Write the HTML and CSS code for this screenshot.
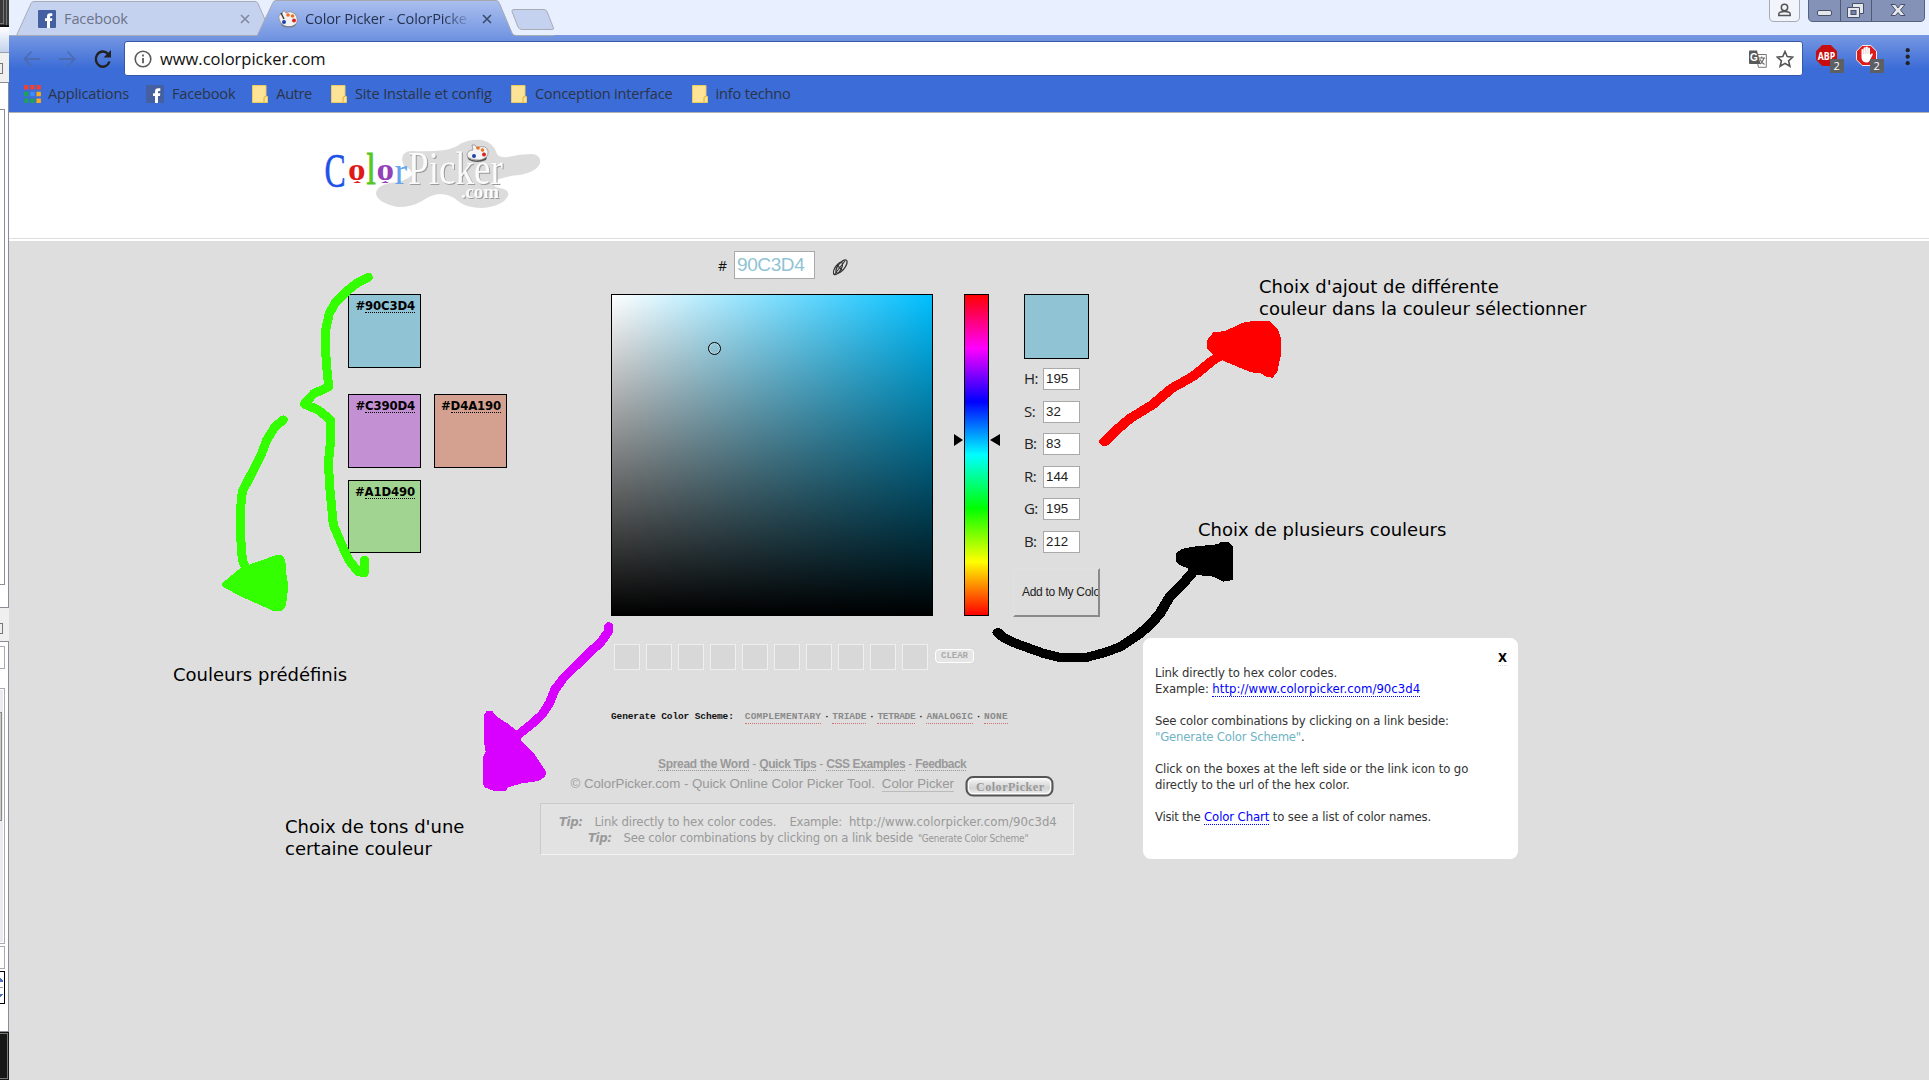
FILE: index.html
```html
<!DOCTYPE html>
<html lang="fr">
<head>
<meta charset="utf-8">
<title>Color Picker - ColorPicker.com</title>
<link rel="stylesheet" href="styles.css">
</head>
<body>
<svg class="backdrop" width="9" height="1080" viewBox="0 0 9 1080" shape-rendering="crispEdges">
  <defs><linearGradient id="bg1" x2="0" y2="1"><stop offset="0" stop-color="#fff"/><stop offset="1" stop-color="#c3d2ec"/></linearGradient></defs>
  <rect width="9" height="1080" fill="#fff"/>
  <rect width="9" height="27" fill="#3a3a3a"/><path d="M3.5 0V23.5H0M6.500 0V25.500" fill="none" stroke="#777"/><rect y="25" width="9" height="2" fill="#111"/>
  <rect y="27" width="9" height="25" fill="url(#bg1)"/><rect y="52" width="9" height="1" fill="#9aa0ac"/>
  <rect y="53" width="9" height="29" fill="#efefef"/><path d="M0 63.500H2.500V73.500H0" fill="none" stroke="#777"/>
  <path d="M0 82.500H8.500V607.500H0M0 109.500H4.500V584.500H0" fill="none" stroke="#8c8c98"/>
  <rect y="608" width="9" height="33" fill="#efefef"/><path d="M0 623.500H2.500V633.500H0" fill="none" stroke="#777"/>
  <path d="M0 641.500H8.500V1031.500H0" fill="none" stroke="#8c8c98"/>
  <path d="M0 646.500H4.500V668.500H0M0 688.500H4.500V943.500H0M0 946.500H4.500V968.500H0" fill="none" stroke="#a9a9b4"/>
  <rect y="690" width="3" height="252" fill="#ececee"/><path d="M0 712.500H1.500V820.500H0" fill="#ccc" stroke="#888"/>
  <path d="M0 971.500H4.500V1003.500H0" fill="none" stroke="#000"/><path d="M0 978V982H3V980ZM0 994H3L0 997Z" fill="#4f6fc0"/><rect y="987" width="3" height="1" fill="#999"/>
  <rect y="1032" width="9" height="48" fill="#161616"/><path d="M0 1033.500H7.500V1078.500H0" fill="none" stroke="#777"/>
</svg>
<div class="window">
  <header class="tabstrip">
    <svg class="tab-shapes" width="560" height="36" viewBox="0 0 560 36">
      <defs><linearGradient id="act" x2="0" y2="1"><stop offset="0" stop-color="#aabfee"/><stop offset="1" stop-color="#7597e2"/></linearGradient></defs>
      <path d="M0 35.500H545" stroke="#a7acb9"/>
      <path d="M7.500 35.500L22 3.500Q23 1.500 25 1.500H246Q248 1.500 249 3.500L263 35.500Z" fill="#c5d2ef" stroke="#a9abb4"/>
      <path d="M248 36L263.500 3.500Q264.500 .5 267 .5H487Q489.500 .5 490.500 3.500L503 33Q504 35.500 507 36Z" fill="url(#act)"/>
      <path d="M248 36L263.500 3.500Q264.500 .5 267 .5H487Q489.500 .5 490.500 3.500L503 33Q504 35.500 507 35.500" fill="none" stroke="#a6a8b0"/>
      <path d="M505 9.500H535Q537 9.500 538 11.500L544.500 28Q545 29.500 543 29.500H513Q510 29.500 509 27L503 11.500Q502.500 9.500 505 9.500Z" fill="#c5d2ef" stroke="#a9abb4"/>
    </svg>
    <div class="tab tab-one">
      <svg class="fb" width="18" height="18" viewBox="0 0 18 18"><rect width="18" height="18" rx="1" fill="#4460a0"/><path d="M9 18V11H7V8.300H9V6.500Q9 3.300 12.200 3.300H14.300V6H13Q12 6 12 7V8.300H14.300L14 11H12V18Z" fill="#fff"/></svg>
      <span class="tab-title">Facebook</span>
      <svg class="close" width="10" height="10" viewBox="0 0 10 10"><path d="M1 1L9 9M9 1L1 9" stroke="#7f8698" stroke-width="1.500"/></svg>
    </div>
    <div class="tab tab-two">
      <svg width="20" height="18" viewBox="0 0 20 18"><path d="M1 9Q0 4 4 4L5 1Q7 0 8 3Q12 0 17 4Q21 9 18 14Q14 18 7 16Q2 14 1 9Z" fill="#f3f3f5" stroke="#888" stroke-width=".8"/><path d="M3 14Q10 19 18 14L17 16Q10 19 4 16Z" fill="#777"/><circle cx="10" cy="5" r="1.800" fill="#f07020"/><circle cx="14.500" cy="6" r="1.800" fill="#f07020"/><circle cx="16" cy="10.500" r="2" fill="#d22"/><circle cx="6" cy="12" r="2" fill="#24a"/><path d="M3 3L6 9" stroke="#444" stroke-width="1.500"/></svg>
      <span class="tab-title">Color Picker - ColorPicke</span>
      <svg class="close" width="10" height="10" viewBox="0 0 10 10"><path d="M1 1L9 9M9 1L1 9" stroke="#3c4a6c" stroke-width="1.600"/></svg>
    </div>
    <svg class="winctl" width="160" height="23" viewBox="0 0 160 23">
      <path d="M.5 -1V17Q.5 21.500 5 21.500H26Q30.500 21.500 30.500 17V-1Z" fill="#f1f4fb" stroke="#a9abb4"/>
      <circle cx="15.500" cy="7.500" r="3.200" fill="none" stroke="#555" stroke-width="1.500"/><path d="M9.800 15.500V14Q10 11.500 15.500 11.500Q21 11.500 21.200 14V15.500Z" fill="none" stroke="#555" stroke-width="1.500"/>
      <path d="M39.500 -1V17Q39.500 21.500 44 21.500H151Q155.500 21.500 155.500 17V-1Z" fill="#8492b8" stroke="#55617f"/><path d="M71.500 0V21M102.500 0V21" stroke="#4e5976"/>
      <rect x="48.500" y="10.500" width="14" height="5" rx="1.500" fill="#e4e6ea" stroke="#46506a"/>
      <path d="M83.500 3.500H94.500V13.500H90.500V17.500H78.500V7.500H83.500Z" fill="#e4e6ea" stroke="#46506a"/><rect x="82" y="10.500" width="5" height="4" fill="#7583a8" stroke="#46506a"/><path d="M83.500 7.500H90.500V13.500" fill="none" stroke="#46506a"/>
      <path d="M122 4.500H126.500L129 8L131.500 4.500H136L131.500 10L136 15.500H131.500L129 12.500L126.500 15.500H122L126.500 10Z" fill="#e4e6ea" stroke="#46506a"/>
    </svg>
  </header>
  <div class="chrome">
    <div class="navrow">
      <svg class="navicons" width="100" height="24" viewBox="0 0 100 24"><path d="M24 12H8.500M15.500 4.500L8.500 12L15.500 19.500M43 12H58.500M51.500 4.500L58.500 12L51.500 19.500" fill="none" stroke="#4b6cb4" stroke-width="1.800"/><path d="M93.500 14.500A7 7.600 0 1 1 92 7" fill="none" stroke="#222" stroke-width="2.400"/><path d="M95 3V10.500H87.500Z" fill="#222"/></svg>
      <div class="omnibox">
        <svg width="18" height="18" viewBox="0 0 18 18"><circle cx="9" cy="9" r="7.800" fill="none" stroke="#5a5a5a" stroke-width="1.600"/><path d="M9 8V13.200M9 4.600V6.400" stroke="#5a5a5a" stroke-width="1.800"/></svg>
        <span class="url">www.colorpicker.com</span>
        <svg class="translate" width="18" height="18" viewBox="0 0 18 18"><path d="M6.500 4.500H17.300V17.300H9.500Z" fill="#fff" stroke="#777"/><path d="M0 1.500Q0 .5 1 .5H8L11.500 14H1Q0 14 0 13Z" fill="#595959"/><text x="1" y="11" class="tg">G</text><path d="M9.500 8H16M12.700 6.500V8M15 8Q13 13 10.800 14M11 9.500Q13 13 15.500 14.500" fill="none" stroke="#666" stroke-width="1.100"/></svg>
        <svg width="18" height="18" viewBox="0 0 18 18"><path d="M9 1.500L11.200 6.600L16.800 7.100L12.600 10.800L13.900 16.300L9 13.400L4.100 16.300L5.400 10.800L1.200 7.100L6.800 6.600Z" fill="none" stroke="#555" stroke-width="1.600"/></svg>
      </div>
      <svg class="ext" width="110" height="34" viewBox="0 0 110 34">
        <path d="M6.200 0H14.800L21 6.200V14.800L14.800 21H6.200L0 14.800V6.200Z" transform="translate(3 4)" fill="#c70d0d"/><text x="4.700" y="18.500" class="abp" textLength="17.500" lengthAdjust="spacingAndGlyphs">ABP</text>
        <rect x="17" y="18" width="14" height="14" fill="#5c5f63"/><text x="20.500" y="29.300" class="bdg">2</text>
        <path d="M6.200 .5H14.800L20.500 6.200V14.800L14.800 20.500H6.200L.5 14.800V6.200Z" transform="translate(43 4)" fill="#e01b1b" stroke="#eee"/><path d="M48.500 14V8.500Q49.500 7.500 50.500 8.500V7Q51.500 5.500 52.500 7V6Q53.800 5 54.900 6V7Q56.500 6 57 7.500V14L58.500 12.500Q60.300 12 59.800 13.500L57 19Q56 22 53 21.500Q49 21 48.500 17Z" fill="#fff"/><path d="M50.700 8V13M52.700 7V13M54.900 7V13" stroke="#e6a0a0" stroke-width=".5"/>
        <rect x="57" y="18" width="14" height="14" fill="#5c5f63"/><text x="60.500" y="29.300" class="bdg">2</text>
        <circle cx="94.700" cy="9.200" r="2.100" fill="#222"/><circle cx="94.700" cy="15.700" r="2.100" fill="#222"/><circle cx="94.700" cy="22.200" r="2.100" fill="#222"/>
      </svg>
    </div>
    <nav class="bookmarks">
      <svg width="17" height="18" viewBox="0 0 17 18"><g fill="#ea4335"><path d="M0 0H4.500V4.500H0ZM6.200 0H10.700V4.500H6.200ZM12.400 0H16.900V4.500H12.400Z"/></g><path d="M0 6.700H4.500V11.200H0ZM0 13.400H4.500V17.900H0ZM6.200 13.400H10.700V17.900H6.200Z" fill="#1fa05c"/><path d="M6.200 6.700H10.700V11.200H6.200Z" fill="#3f8cff"/><path d="M12.400 6.700H16.900V11.200H12.400ZM12.400 13.400H16.900V17.900H12.400Z" fill="#f5ab1c"/></svg>
      <span class="bm b1">Applications</span>
      <svg width="18" height="18" viewBox="0 0 18 18"><rect width="18" height="18" rx="1" fill="#4460a0"/><path d="M9 18V11H7V8.300H9V6.500Q9 3.300 12.200 3.300H14.300V6H13Q12 6 12 7V8.300H14.300L14 11H12V18Z" fill="#fff"/></svg>
      <span class="bm b2">Facebook</span>
      <svg width="16" height="18" viewBox="0 0 16 18"><path d="M.5 .5H14V11.500H15.500V17.500H.5Z" fill="#fde396" stroke="#eccb5e"/><path d="M12 17V13Q12 11.500 14 11.500" fill="none" stroke="#d9ae35"/></svg>
      <span class="bm b3">Autre</span>
      <svg width="16" height="18" viewBox="0 0 16 18"><path d="M.5 .5H14V11.500H15.500V17.500H.5Z" fill="#fde396" stroke="#eccb5e"/><path d="M12 17V13Q12 11.500 14 11.500" fill="none" stroke="#d9ae35"/></svg>
      <span class="bm b4">Site Installe et config</span>
      <svg width="16" height="18" viewBox="0 0 16 18"><path d="M.5 .5H14V11.500H15.500V17.500H.5Z" fill="#fde396" stroke="#eccb5e"/><path d="M12 17V13Q12 11.500 14 11.500" fill="none" stroke="#d9ae35"/></svg>
      <span class="bm b5">Conception interface</span>
      <svg width="16" height="18" viewBox="0 0 16 18"><path d="M.5 .5H14V11.500H15.500V17.500H.5Z" fill="#fde396" stroke="#eccb5e"/><path d="M12 17V13Q12 11.500 14 11.500" fill="none" stroke="#d9ae35"/></svg>
      <span class="bm b6">info techno</span>
    </nav>
  </div>
  <div class="site-head">
    <svg class="logo" width="240" height="80" viewBox="320 130 240 80">
      <path d="M402 160Q402 151 412 151Q430 152 445 150Q455 148 460 144Q470 139 482 140Q494 143 497 154Q500 158 508 157Q520 154 532 154Q541 155 540 163Q538 171 520 175Q505 176 494 181Q492 187 500 188Q510 190 508 196Q503 206 482 208Q466 208 458 201Q450 194 440 194Q430 195 422 201Q412 207 398 207Q378 203 376 194Q376 186 390 183Q405 182 412 175Q413 170 404 166Z" fill="#dcdcdc"/>
      <g class="lg"><text transform="translate(324.500 186.500) scale(.66 1.020)" font-size="48" fill="#1d52e8" stroke="#1d52e8" stroke-width=".6">C</text><text transform="translate(348 180) scale(.95 .85)" font-size="37" font-weight="bold" fill="#e01818">o</text><path d="M353 183L357.500 181L361 183Z" fill="#e01818"/><text transform="translate(366.500 184) scale(.75 1)" font-size="44" fill="#55c81e" stroke="#55c81e" stroke-width="1">l</text><text transform="translate(376.500 180) scale(.95 .85)" font-size="37" font-weight="bold" fill="#9440b8">o</text><path d="M381 183L385.500 181L389 183Z" fill="#9440b8"/><text transform="translate(394.500 184)" font-size="38" fill="#67a4ea">r</text></g>
      <g class="lg relief" fill="#fbfbfb"><text x="408" y="184" font-size="46" textLength="95" lengthAdjust="spacingAndGlyphs">Picker</text><text x="461" y="197.500" font-size="19" font-weight="bold" textLength="38">.com</text></g>
      <path d="M467 156Q467 150 473 150L472 145H475L477 148Q486 144 488 151Q489 158 480 160Q470 160 467 156Z" fill="#f5f5f5" stroke="#777" stroke-width=".6"/><path d="M467 157Q476 164 487 157L486 160Q477 164 469 160Z" fill="#555"/><circle cx="478" cy="148" r="1.800" fill="#f07020"/><circle cx="482.500" cy="150" r="1.800" fill="#f07020"/><circle cx="484" cy="154.500" r="2" fill="#d22"/><circle cx="474" cy="156" r="2" fill="#24a"/>
    </svg>
  </div>
  <main class="page">
    <div class="hexrow">
      <span class="hash">#</span><span class="hexinput">90C3D4</span>
      <svg class="linkicon" width="18" height="20" viewBox="0 0 18 20"><g fill="none" stroke="#333" stroke-width="1.300"><ellipse cx="7" cy="10.500" rx="7" ry="3" transform="rotate(-58 7 10.500)" /><ellipse cx="10.500" cy="8.500" rx="8" ry="3.400" transform="rotate(-52 10.500 8.500)"/><path d="M3 17L14 3M6 7L11 12" stroke-width="1.100"/></g></svg>
    </div>
    <div class="workspace">
      <div class="swatches">
        <div class="sw s1">#<span class="sx">90C3D4</span></div>
        <div class="sw s2">#<span class="sx">C390D4</span></div>
        <div class="sw s3">#<span class="sx">D4A190</span></div>
        <div class="sw s4">#<span class="sx">A1D490</span></div>
      </div>
      <div class="sv"><i class="cursor"></i></div>
      <div class="hue"><svg class="hue-arrows" width="47" height="12" viewBox="0 0 47 12"><path d="M1 0L10 6L1 12ZM47 0L37 6L47 12Z"/></svg></div>
      <div class="fields">
        <div class="current"></div>
        <label>H:<span>195</span></label><label>S:<span>32</span></label><label>B:<span>83</span></label><label>R:<span>144</span></label><label>G:<span>195</span></label><label>B:<span>212</span></label>
        <div class="addbtn">Add to My Colors</div>
      </div>
    </div>
    <div class="mine"><i></i><i></i><i></i><i></i><i></i><i></i><i></i><i></i><i></i><i></i><span class="clear">CLEAR</span></div>
    <div class="scheme"><b class="g0">Generate Color Scheme:</b><a class="g1">COMPLEMENTARY</a><em>·</em><a class="g2">TRIADE</a><em>·</em><a class="g3">TETRADE</a><em>·</em><a class="g4">ANALOGIC</a><em>·</em><a class="g5">NONE</a></div>
    <div class="links"><a class="l1">Spread the Word</a><em>-</em><a class="l2">Quick Tips</a><em>-</em><a class="l3">CSS Examples</a><em>-</em><a class="l4">Feedback</a></div>
    <div class="copy"><span class="c1">© ColorPicker.com - Quick Online Color Picker Tool.</span><a>Color Picker</a>
      <svg width="90" height="22" viewBox="0 0 90 22"><defs><linearGradient id="bd" x2="0" y2="1"><stop offset="0" stop-color="#fafafa"/><stop offset=".6" stop-color="#d2d2d2"/><stop offset="1" stop-color="#f6f6f6"/></linearGradient></defs><rect x="1.500" y="1" width="86" height="18.500" rx="6.500" fill="url(#bd)" stroke="#555" stroke-width="2"/><rect x="3.500" y="3" width="82" height="14.500" rx="5" fill="none" stroke="#fff"/><text x="11" y="15" class="badge-t" textLength="68">ColorPicker</text></svg></div>
    <div class="tips">
      <div class="r1"><b>Tip:</b><span class="p1">Link directly to hex color codes.</span><span class="p2">Example:</span><span class="p3">http://www.colorpicker.com/90c3d4</span></div>
      <div class="r2"><b>Tip:</b><span class="p4">See color combinations by clicking on a link beside</span><small>"Generate Color Scheme"</small></div>
    </div>
    <aside class="popup">
      <a class="x">X</a>
      <p>Link directly to hex color codes.<br>Example: <a class="url-link">http://www.colorpicker.com/90c3d4</a></p>
      <p><span class="q4">See color combinations by clicking on a link beside:</span><br><span class="q5">"Generate Color Scheme"</span>.</p>
      <p>Click on the boxes at the left side or the link icon to go<br>directly to the url of the hex color.</p>
      <p><span class="q8">Visit the</span> <a>Color Chart</a> to see a list of color names.</p>
    </aside>
  </main>
</div>
<svg class="strokes" width="1929" height="1080" viewBox="0 0 1929 1080" shape-rendering="crispEdges">
  <g transform="translate(210 250) scale(.33333)" class="green"><path class="ln" d="M475 82L440 100L405 128L378 155L358 190L348 235L346 290L350 350L356 410L310 432L283 462L325 480L362 510L362 570L355 640L360 720L370 825L400 895L420 935L445 965L463 968V930M220 510L195 530L170 570L155 610L130 660L97 725L91 780L92 860L97 930L110 960"/><path d="M36 1002L48 990L90 955L120 943L200 915H215L226 930L228 965L234 1000L232 1040L226 1072L215 1083H190L150 1065L100 1043L60 1022L38 1010Z"/></g>
  <g transform="translate(260 600) scale(.33333)" class="magenta"><path class="ln" d="M1046 80L1045 95L1020 130L990 155L950 195L910 235L885 268L868 310L845 345L815 372L765 412"/><path d="M672 345L680 333H697L710 350L745 372L767 390L783 420L822 460L858 515L856 530L835 543L785 550L745 562L737 572H700L675 562L669 552V470L677 455L672 425Z"/></g>
  <g transform="translate(980 260) scale(.3954 .33333)" class="red"><path class="ln" d="M315 545L350 505L380 475L435 435L485 385L540 348L590 300L620 280"/><path d="M575 240L590 217L620 213L665 188L690 183H732L752 205L760 230V290L752 335L740 353L725 351L710 340L685 337L655 322L620 305L590 285L575 268Z"/></g>
  <g transform="translate(980 260) scale(.3954 .33333)" class="black"><path class="ln" d="M45 1118L60 1133L90 1150L160 1180L200 1192H270L320 1176L355 1160L400 1125L430 1095L455 1060L480 1010L510 975L550 920"/><path d="M496 880L510 867L540 860L600 853L610 846H628L641 862V960L615 965L590 950L550 945L545 935L525 925L505 915L496 905Z"/></g>
</svg>
<p class="note n1">Choix d'ajout de différente<br>couleur dans la couleur sélectionner</p>
<p class="note n2">Choix de plusieurs couleurs</p>
<p class="note n3">Couleurs prédéfinis</p>
<p class="note n4">Choix de tons d'une<br>certaine couleur</p>
</body>
</html>
```

FILE: styles.css
```css
* { box-sizing: border-box; }
body { margin: 0; width: 1929px; height: 1080px; overflow: hidden; display: flex; position: relative; background: #dedede; font-family: "DejaVu Sans Condensed", "DejaVu Sans", sans-serif; font-stretch: condensed; }
svg { display: block; flex: none; }
i, em { font-style: normal; }
.window { flex: 1; display: flex; flex-direction: column; }
span, a, b, small { white-space: nowrap; }

/* browser chrome */
.tabstrip { height: 35px; background: #e8effe; position: relative; display: flex; align-items: flex-start; }
.tab-shapes { position: absolute; left: 0; top: 0; }
.tab { position: relative; display: flex; height: 38px; align-items: center; font: 14.6px/36px "Open Sans", sans-serif; letter-spacing: -.15px; }
.tab-one { width: 241px; padding-left: 29px; color: #6c7489; }
.tab-two { width: 242px; padding-left: 28px; color: #26324f; }
.tab-title { flex: 1; height: 38px; }
.tab-one .tab-title { margin-left: 8px; }
.tab-two .tab-title { margin-left: 7px; overflow: hidden; -webkit-mask-image: linear-gradient(90deg, #000 138px, transparent 168px); mask-image: linear-gradient(90deg, #000 138px, transparent 168px); }
.winctl { margin-left: auto; }
.chrome { height: 78px; background: linear-gradient(#7798e2, #3b6cd7 34px); border-bottom: 1px solid #b4b2ae; }
.navrow { height: 41px; padding-top: 6px; display: flex; align-items: flex-start; }
.navicons { margin: 6px 0 0 7px; }
.omnibox { width: 1679px; height: 35px; margin-left: 8px; background: #fff; border: 1px solid #3659a8; border-radius: 3px; display: flex; align-items: center; padding: 0 8px 0 9px; }
.url { flex: 1; margin-left: 8px; font: 16.5px "Open Sans", sans-serif; color: #111; }
.translate { margin-right: 9px; }
.tg { font: bold 10px "Liberation Sans"; fill: #fff; }
.abp { font: bold 11px "Open Sans"; fill: #fff; }
.bdg { font: 11px "Open Sans"; fill: #fff; }
.ext { margin-left: 10px; }
.bookmarks { height: 35px; display: flex; align-items: center; padding-left: 15px; color: #2b3448; font: 14.6px "Open Sans", sans-serif; }
.bm { margin: 0 19px 2px 8px; }
.b1 { margin-left: 7px; margin-right: 17px; letter-spacing: -.18px; }
.b2 { margin-right: 17px; letter-spacing: -.2px; }
.b3 { letter-spacing: -.4px; }
.b4 { letter-spacing: -.13px; }
.b5 { letter-spacing: -.2px; }
.b6 { letter-spacing: -.2px; }

/* site header */
.site-head { height: 128px; background: linear-gradient(#fff 125px, #dedede 125px 126px, #fff 126px); padding: 17px 0 0 311px; }
.lg { font-family: "Liberation Serif", serif; font-stretch: normal; }
.relief { filter: drop-shadow(1px 1.5px 0 #9a9a9a); }

/* picker */
.page { flex: 1; position: relative; background: #dedede; }
.hexrow { height: 53px; display: flex; padding: 10px 0 0 709px; }
.hash { width: 16px; font: 14px/30px "Open Sans", sans-serif; color: #111; }
.hexinput { width: 81px; height: 28px; background: #fff; border: 1px solid #a9a9a9; padding-left: 2px; color: #90c3d4; font: 19px/26px "Liberation Sans", sans-serif; letter-spacing: -.4px; }
.linkicon { margin: 7px 0 0 16px; }
.workspace { display: flex; height: 323px; }
.swatches { width: 263px; margin-left: 339px; display: grid; grid-template-columns: 73px 73px; grid-template-rows: 100px 86px 73px; column-gap: 13px; align-content: start; }
.sw { border: 1px solid #000; font-weight: bold; font-size: 13px; line-height: 16px; padding: 3px 5px 0 0; text-align: right; letter-spacing: -.15px; }
.sx { display: inline-block; height: 15px; line-height: 16px; border-bottom: 1px dotted #000; vertical-align: top; }
.s1, .s2, .s3 { height: 74px; }
.s1 { background: #90c3d4; grid-column: 1; }
.s2 { background: #c390d4; grid-row: 2; }
.s3 { background: #d4a190; grid-row: 2; }
.s4 { background: #a1d490; grid-row: 3; }
.sv { width: 322px; height: 322px; border: 1px solid #000; position: relative; background: linear-gradient(to top, #000, transparent), linear-gradient(to right, #fff, #00bfff); }
.cursor { position: absolute; left: 96px; top: 47px; width: 13px; height: 13px; border: 1px solid #000; border-radius: 50%; box-shadow: inset 0 0 0 1px rgba(255,255,255,.35); }
.hue { width: 25px; height: 322px; margin-left: 31px; border: 1px solid #000; position: relative; background: linear-gradient(#f00, #f0f, #00f, #0ff, #0f0, #ff0, #f00); }
.hue-arrows { position: absolute; left: -12px; top: 139px; }
.fields { margin-left: 35px; width: 80px; }
.current { width: 65px; height: 65px; background: #90c3d4; border: 1px solid #000; margin-bottom: 9px; }
.fields label { display: flex; justify-content: space-between; width: 56px; height: 32.6px; color: #222; font: 15px/20px "Open Sans", sans-serif; letter-spacing: -.6px; }
.fields label span { width: 37px; height: 22px; border: 1px solid #a9a9a9; background: #fff; padding-left: 2px; font: 13.3px/19px "Liberation Sans", sans-serif; letter-spacing: 0; }
.addbtn { margin: 4px 0 0 -11px; width: 87px; height: 49px; border: 2px solid; border-color: #e0e0e0 #8a8a8a #8a8a8a #e0e0e0; overflow: hidden; white-space: nowrap; padding-left: 7px; font: 12px/45px "Liberation Sans", sans-serif; letter-spacing: -.3px; color: #222; }

.mine { display: flex; gap: 6px; margin-top: 27px; padding-left: 605px; height: 63px; }
.mine i { width: 26px; height: 26px; border: 1px solid #efefef; background: #d8d8d8; }
.clear { width: 39px; height: 14px; margin: 5px 0 0 1px; background: #e6e6e6; border: 1px solid #fff; border-radius: 4px; color: #aaa; text-align: center; font: bold 9px/13px "Liberation Mono", monospace; }
.scheme { display: flex; padding-left: 602px; height: 47px; font: bold 9.5px/20px "Liberation Mono", monospace; color: #111; }
.scheme a { height: 17px; color: #8a8a8a; border-bottom: 1px dotted #d07070; }
.scheme em { width: 11px; text-align: center; }
.g0 { margin-right: 11px; letter-spacing: -.12px; }
.g1 { letter-spacing: .18px; }
.g3 { letter-spacing: -.28px; }
.g4 { letter-spacing: .12px; }
.g5 { letter-spacing: .3px; }
.links { display: flex; padding-left: 649px; height: 20px; font: bold 12px/20px "Liberation Sans", sans-serif; color: #999; }
.links a { height: 17px; border-bottom: 1px dotted #999; }
.links em { width: 10px; text-align: center; font-weight: normal; }
.l1 { letter-spacing: -.3px; }
.l2, .l3 { letter-spacing: -.42px; }
.l4 { letter-spacing: -.56px; }
.copy { display: flex; padding-left: 561.5px; height: 29px; font: 13.3px/20px "Liberation Sans", sans-serif; color: #999; }
.c1 { letter-spacing: -.03px; }
.copy a { margin: 0 11px 0 7px; height: 18px; border-bottom: 1px solid #bbb; letter-spacing: -.03px; }
.copy svg { margin-top: 2px; }
.badge-t { font: bold 12px "Liberation Serif"; fill: #999; }
.tips { margin-left: 531px; width: 534px; height: 52px; border: 1px solid; border-color: #c9c9c9 #f2f2f2 #f2f2f2 #c9c9c9; background: #e2e2e2; font-size: 13px; line-height: 16px; padding: 10px 0 0 18px; color: #999; }
.tips div { display: flex; }
.tips b { font-style: italic; margin-right: 12px; letter-spacing: -.4px; }
.r2 { padding-left: 29px; }
.p1 { margin-right: 13px; letter-spacing: -.12px; }
.p2 { margin-right: 7px; letter-spacing: -.28px; }
.p3 { letter-spacing: .05px; }
.p4 { margin-right: 5px; letter-spacing: -.18px; }
.tips small { font-size: 10px; line-height: 17px; letter-spacing: -.23px; }

.popup { position: absolute; left: 1134px; top: 397px; width: 375px; height: 221px; background: #fff; border-radius: 8px; padding: 27px 12px 0; color: #333; font-size: 13px; line-height: 16px; letter-spacing: -.12px; white-space: nowrap; }
.popup p { margin: 0 0 16px; }
.popup p a { color: #00f; border-bottom: 1px dotted #00f; }
.popup .url-link { letter-spacing: .05px; }
.q4 { letter-spacing: -.17px; }
.q5 { color: #6fb3c4; letter-spacing: -.19px; }
.q8 { letter-spacing: -.26px; }
.x { position: absolute; right: 11px; top: 12px; color: #000; font-weight: bold; font-size: 13px; line-height: 15px; border-bottom: 1px dotted #cde; }

/* hand-drawn annotations */
.strokes { position: absolute; left: 0; top: 0; }
.ln { fill: none; stroke-width: 27; stroke-linecap: round; stroke-linejoin: round; }
.green { fill: #3f0; stroke: #3f0; stroke-width: 0; }
.magenta { fill: #d800ff; stroke: #d800ff; stroke-width: 0; }
.red { fill: #f00; stroke: #f00; stroke-width: 0; }
.black { fill: #000; stroke: #000; stroke-width: 0; }
.note { position: absolute; margin: 0; font: 18px/22px "DejaVu Sans", sans-serif; font-stretch: normal; color: #000; white-space: nowrap; }
.n1 { left: 1259px; top: 276px; }
.n2 { left: 1198px; top: 519px; }
.n3 { left: 173px; top: 664px; }
.n4 { left: 285px; top: 816px; }
```
